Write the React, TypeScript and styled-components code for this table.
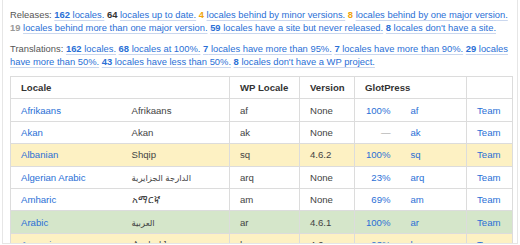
import React from 'react';
import styled, {createGlobalStyle} from 'styled-components';

const Global = createGlobalStyle`
  html, body {
    margin: 0;
    padding: 0;
    background: #fff;
  }
  body {
    font-family: "Liberation Sans", Arial, "DejaVu Sans", sans-serif;
    font-size: 9.4px;
    color: #444;
  }
`;

const Frame = styled.div`
  margin-left: 2px;
  width: 503px;
  height: 235px;
  padding: 8px 4px 0 7px;
  border: 1px solid #e6e6e6;
  border-top: none;
  overflow: hidden;
`;

const Summary = styled.p`
  margin: 0 0 8px;
  line-height: 13px;
  color: #555;
`;

const Num = styled.b<{$tone?: 'dark' | 'orange' | 'gray'}>`
  font-weight: bold;
  color: ${p => (p.$tone === 'orange' ? '#f0a30a' : p.$tone === 'gray' ? '#999' : '#333')};
`;

const Link = styled.a`
  color: #2a6fd6;
  text-decoration: underline;
  text-decoration-color: #cad7ee;
  text-underline-offset: 2px;
  b {
    font-weight: bold;
  }
`;

const Table = styled.table`
  width: 502px;
  table-layout: fixed;
  border-collapse: collapse;
  border: 1px solid #dcdcdc;
  margin-top: 8px;
  font-size: 9.6px;
`;

const Row = styled.tr<{$tone?: 'yellow' | 'green'}>`
  height: 22.4px;
  background: ${p => (p.$tone === 'yellow' ? '#fdf1c3' : p.$tone === 'green' ? '#d5e6ca' : '#fff')};
`;

const HeadCell = styled.th`
  text-align: left;
  font-weight: bold;
  color: #333;
  padding: 0 10px;
  border: 1px solid #dcdcdc;
  white-space: nowrap;
`;

const Cell = styled.td<{$right?: boolean; $open?: boolean}>`
  padding: 0 10px;
  text-align: ${p => (p.$right ? 'right' : 'left')};
  border-top: 1px solid #dcdcdc;
  border-bottom: 1px solid #dcdcdc;
  border-left: ${p => (p.$open ? 'none' : '1px solid #dcdcdc')};
  color: #444;
  white-space: nowrap;
  overflow: hidden;
`;

const Native = styled.span<{$small?: boolean}>`
  font-size: ${p => (p.$small ? '8.5px' : 'inherit')};
`;

const CellLink = styled.a`
  color: #2a6fd6;
  text-decoration: none;
`;

const Dash = styled.span`
  color: #999;
`;

type Locale = {
  name: string;
  native: string;
  small?: boolean;
  wp: string;
  version: string;
  percent: string | null;
  slug: string;
  tone?: 'yellow' | 'green';
};

const locales: Locale[] = [
  {name: 'Afrikaans', native: 'Afrikaans', wp: 'af', version: 'None', percent: '100%', slug: 'af'},
  {name: 'Akan', native: 'Akan', wp: 'ak', version: 'None', percent: null, slug: 'ak'},
  {name: 'Albanian', native: 'Shqip', wp: 'sq', version: '4.6.2', percent: '100%', slug: 'sq', tone: 'yellow'},
  {name: 'Algerian Arabic', native: 'الدارجة الجزايرية', small: true, wp: 'arq', version: 'None', percent: '23%', slug: 'arq'},
  {name: 'Amharic', native: 'አማርኛ', wp: 'am', version: 'None', percent: '69%', slug: 'am'},
  {name: 'Arabic', native: 'العربية', small: true, wp: 'ar', version: '4.6.1', percent: '100%', slug: 'ar', tone: 'green'},
  {name: 'Armenian', native: 'Հայերեն', small: true, wp: 'hy', version: '4.6', percent: '93%', slug: 'hy', tone: 'yellow'},
];

function App() {
  return (
    <Frame>
      <Global />
      <Summary>
        Releases: <Link><b>162</b> locales.</Link> <Num>64</Num> <Link>locales up to date.</Link>{' '}
        <Num $tone='orange'>4</Num> <Link>locales behind by minor versions.</Link>{' '}
        <Num $tone='orange'>8</Num> <Link>locales behind by one major version.</Link>{' '}
        <Num $tone='gray'>19</Num> <Link>locales behind more than one major version.</Link>{' '}
        <Link><b>59</b> locales have a site but never released.</Link>{' '}
        <Link><b>8</b> locales don't have a site.</Link>
      </Summary>
      <Summary>
        Translations: <Link><b>162</b> locales.</Link> <Link><b>68</b> locales at 100%.</Link>{' '}
        <Link><b>7</b> locales have more than 95%.</Link> <Link><b>7</b> locales have more than 90%.</Link>{' '}
        <Link><b>29</b> locales have more than 50%.</Link> <Link><b>43</b> locales have less than 50%.</Link>{' '}
        <Link><b>8</b> locales don't have a WP project.</Link>
      </Summary>
      <Table>
        <colgroup>
          <col style={{width: 111}} />
          <col style={{width: 108}} />
          <col style={{width: 70}} />
          <col style={{width: 55}} />
          <col style={{width: 46}} />
          <col style={{width: 66}} />
          <col style={{width: 46}} />
        </colgroup>
        <thead>
          <Row>
            <HeadCell colSpan={2}>Locale</HeadCell>
            <HeadCell>WP Locale</HeadCell>
            <HeadCell>Version</HeadCell>
            <HeadCell colSpan={2}>GlotPress</HeadCell>
            <HeadCell></HeadCell>
          </Row>
        </thead>
        <tbody>
          {locales.map(l => (
            <Row key={l.wp} $tone={l.tone}>
              <Cell><CellLink>{l.name}</CellLink></Cell>
              <Cell $open><Native $small={l.small}>{l.native}</Native></Cell>
              <Cell>{l.wp}</Cell>
              <Cell>{l.version}</Cell>
              <Cell $right>{l.percent ? <CellLink>{l.percent}</CellLink> : <Dash>—</Dash>}</Cell>
              <Cell $open><CellLink>{l.slug}</CellLink></Cell>
              <Cell><CellLink>Team</CellLink></Cell>
            </Row>
          ))}
        </tbody>
      </Table>
    </Frame>
  );
}

export default App;
